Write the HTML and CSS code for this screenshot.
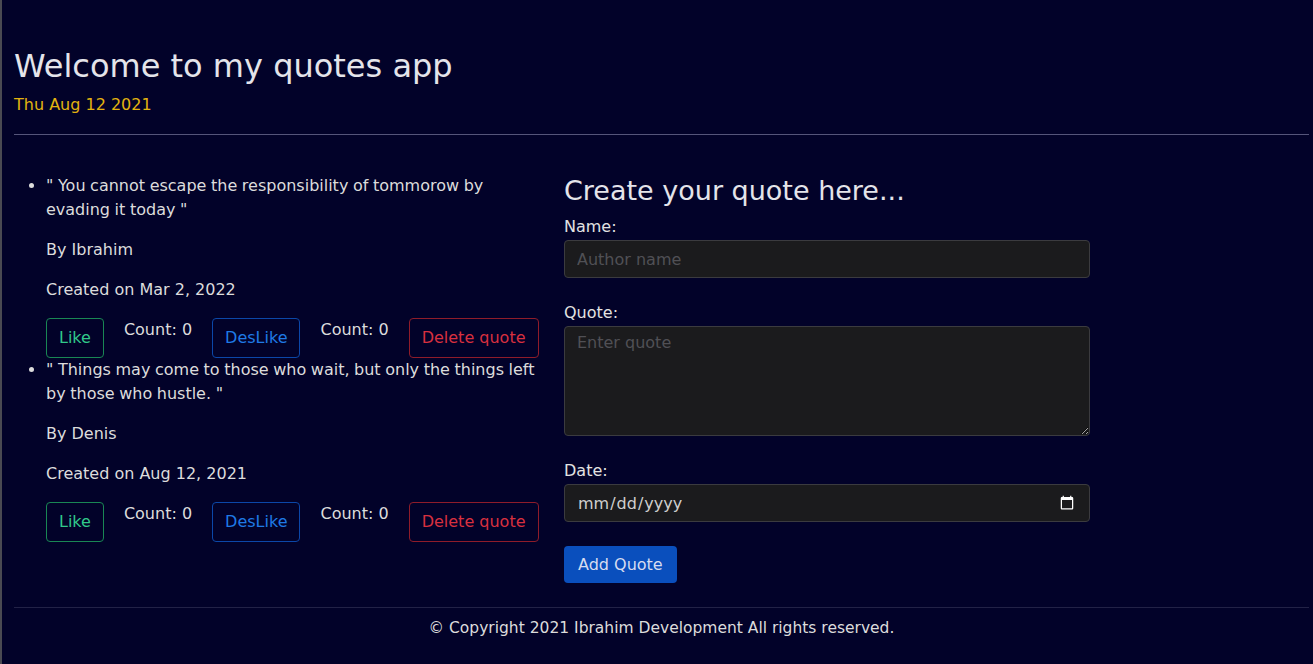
FILE: index.html
```html
<!DOCTYPE html>
<html lang="en">
<head>
<meta charset="utf-8">
<title>Quotes app</title>
<link rel="stylesheet" href="styles.css">
</head>
<body>
<div class="page">
  <header class="header">
    <h1 class="title">Welcome to my quotes app</h1>
    <p class="today">Thu Aug 12 2021</p>
  </header>
  <hr class="rule">
  <main class="row">
    <section class="col">
      <ul class="quotes">
        <li class="quote">
          <p class="quote-text">" You cannot escape the responsibility of tommorow by evading it today "</p>
          <p class="meta">By Ibrahim</p>
          <p class="meta">Created on Mar 2, 2022</p>
          <div class="actions">
            <button class="btn btn-like">Like</button>
            <span class="count">Count: 0</span>
            <button class="btn btn-dislike">DesLike</button>
            <span class="count">Count: 0</span>
            <button class="btn btn-delete">Delete quote</button>
          </div>
        </li>
        <li class="quote">
          <p class="quote-text">" Things may come to those who wait, but only the things left by those who hustle. "</p>
          <p class="meta">By Denis</p>
          <p class="meta">Created on Aug 12, 2021</p>
          <div class="actions">
            <button class="btn btn-like">Like</button>
            <span class="count">Count: 0</span>
            <button class="btn btn-dislike">DesLike</button>
            <span class="count">Count: 0</span>
            <button class="btn btn-delete">Delete quote</button>
          </div>
        </li>
      </ul>
    </section>
    <section class="col">
      <h3 class="form-title">Create your quote here...</h3>
      <form class="form">
        <label class="label" for="name">Name:</label>
        <input class="field" id="name" type="text" placeholder="Author name">
        <label class="label" for="quote">Quote:</label>
        <textarea class="field area" id="quote" placeholder="Enter quote"></textarea>
        <label class="label" for="date">Date:</label>
        <input class="field" id="date" type="date">
        <div><button type="button" class="btn-add">Add Quote</button></div>
      </form>
    </section>
  </main>
  <hr class="rule rule-foot">
  <footer class="footer">© Copyright 2021 Ibrahim Development All rights reserved.</footer>
</div>
</body>
</html>
```

FILE: styles.css
```css
* { box-sizing: border-box; }
html, body { margin: 0; }
body {
  background: #020229;
  color: #dcdcdc;
  font-family: "DejaVu Sans", sans-serif;
  font-size: 16px;
  line-height: 24px;
  border-left: 2px solid #4a4a52;
  min-height: 664px;
}
.page { padding: 0 4px 0 12px; }
.header { padding-top: 47px; }
.title {
  margin: 0;
  font-size: 32px;
  font-weight: 400;
  line-height: 38px;
  color: #e4e4ea;
}
.today {
  margin: 8px 0 0;
  color: #e3b30f;
  font-size: 16px;
  line-height: 24px;
}
.rule {
  border: 0;
  border-top: 1px solid #55557a;
  margin: 17px 0 0;
}
.row {
  display: flex;
  gap: 24px;
  padding-top: 39px;
}
.col { width: 526px; }
.quotes { margin: 0; padding-left: 32px; }
.quote-text { margin: 0 0 16px; word-spacing: -0.5px; }
.meta { margin: 0 0 16px; }
.actions {
  display: flex;
  align-items: flex-start;
  gap: 20px;
  white-space: nowrap;
}
.count { line-height: 24px; flex-shrink: 0; }
.btn {
  flex-shrink: 0;
  background: transparent;
  font-family: inherit;
  font-size: 16px;
  line-height: 24px;
  padding: 7px 12px;
  border-radius: 4px;
  border: 1px solid;
}
.btn-like { color: #31c98b; border-color: #198754; }
.btn-dislike { color: #1f7ae6; border-color: #0b47a8; }
.btn-delete { color: #d8303f; border-color: #8f1c2a; }
.form-title {
  margin: 0 0 7px;
  font-size: 27px;
  font-weight: 400;
  line-height: 34px;
  color: #e4e4ea;
}
.form { display: flex; flex-direction: column; }
.label { display: block; color: #e2e2e2; line-height: 24px; }
.field {
  display: block;
  width: 100%;
  height: 38px;
  margin: 1px 0 23px;
  padding: 6px 12px;
  background: #1b1b1d;
  border: 1px solid #3b3b3f;
  border-radius: 4px;
  color: #cfcfcf;
  font-family: inherit;
  font-size: 16px;
  color-scheme: dark;
}
.field::placeholder { color: #505055; }
.area { height: 110px; resize: vertical; }
#date { margin-bottom: 24px; }
.btn-add {
  background: #0a4fbd;
  color: #d6dcf0;
  border: 0;
  border-radius: 4px;
  padding: 6px 14px;
  height: 37px;
  font-family: inherit;
  font-size: 16px;
}
.rule-foot { border-top-color: #222246; margin-top: 24px; }
.footer {
  text-align: center;
  padding-top: 8px;
  line-height: 24px;
  font-size: 15.5px;
  color: #dcdcdc;
}
```
